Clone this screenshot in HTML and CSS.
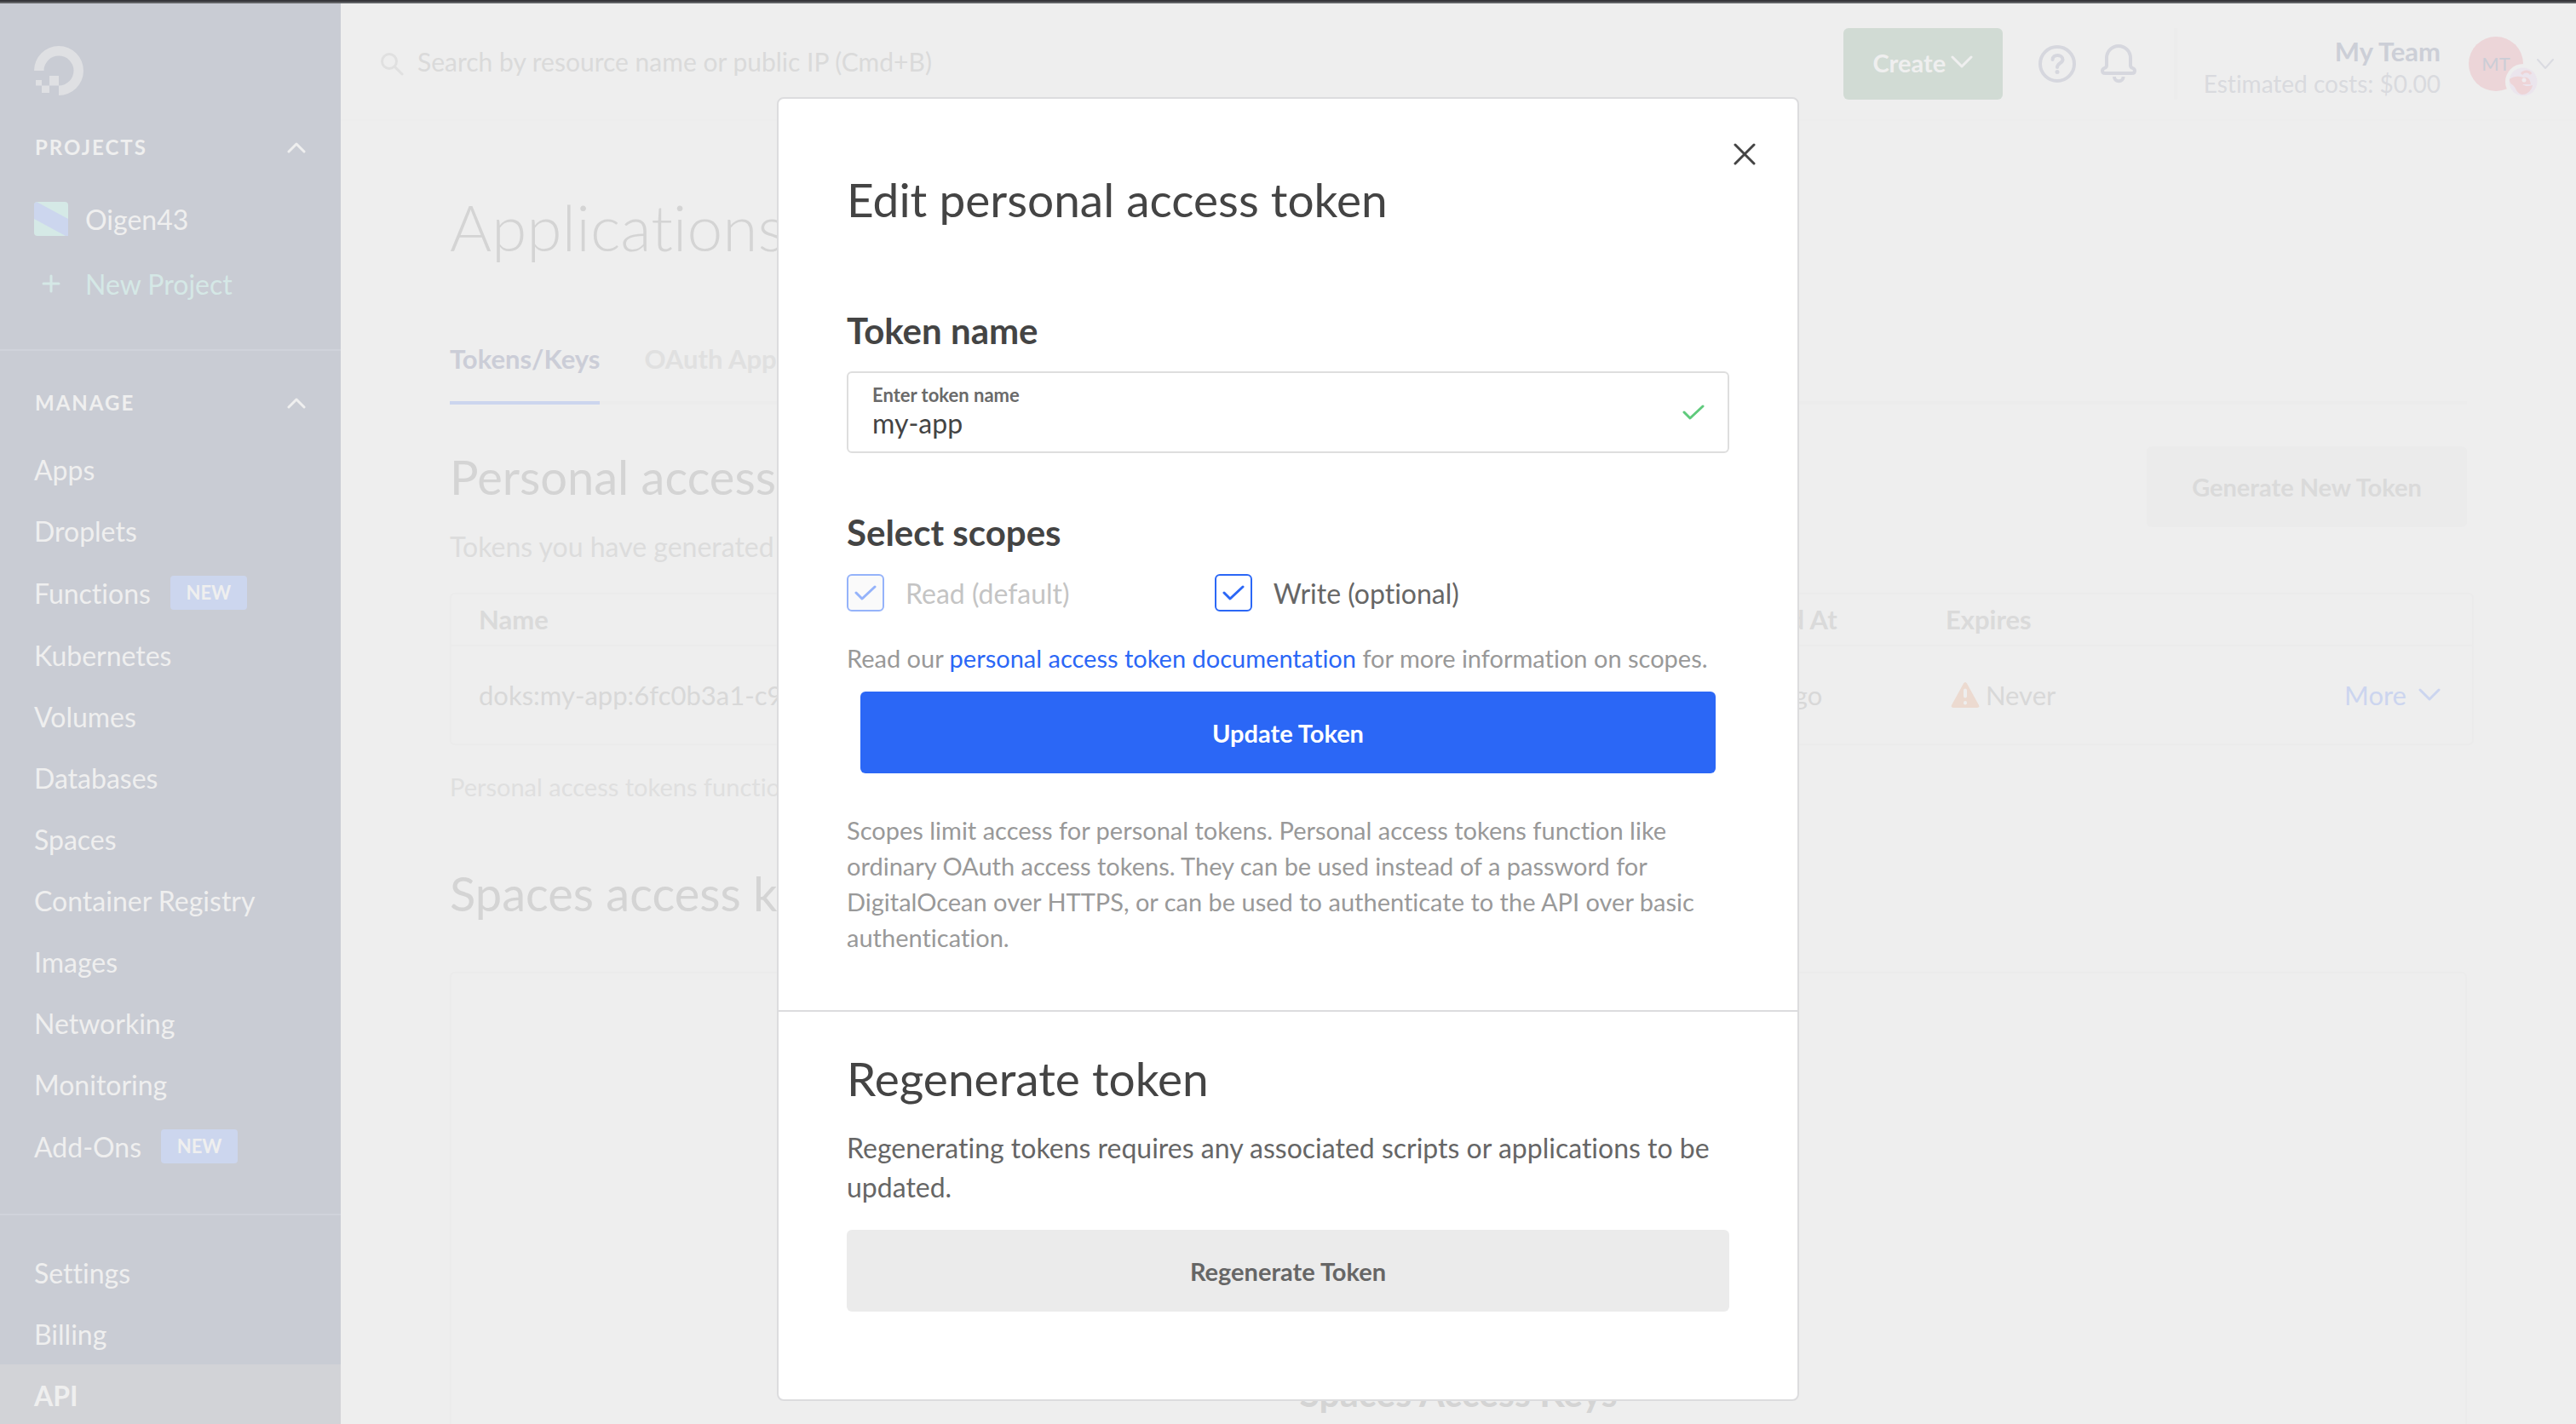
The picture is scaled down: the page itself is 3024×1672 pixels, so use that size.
FILE: index.html
```html
<!DOCTYPE html>
<html lang="en">
<head>
<meta charset="utf-8">
<meta name="viewport" content="width=device-width, initial-scale=1">
<title>Edit personal access token</title>
<link rel="stylesheet" href="styles.css">
</head>
<body>
<div class="app">
  <aside class="sidebar">
    <a class="logo" href="#" aria-label="Home">
      <svg width="58" height="58" viewBox="0 0 58 58" fill="currentColor"><path d="M29 58V46.5A17.5 17.5 0 1 0 11.5 29H0A29 29 0 1 1 29 58Z"/><path d="M18 35h11v11.500H18zM9 46.500h9V55H9zM2 40h7v6.500H2z"/></svg>
    </a>
    <section class="projects">
      <button class="group-title" type="button">PROJECTS
        <svg class="chevron" width="22" height="14" viewBox="0 0 22 14"><path d="M2 12l9-9 9 9"/></svg>
      </button>
      <a class="project" href="#">
        <svg class="project-icon" width="40" height="40" viewBox="0 0 40 40"><rect width="40" height="40" rx="4" fill="#d5e9e6"/><path d="M0 2v18l37 20h3V20L3 0z" fill="#ccd6ee"/></svg>
        Oigen43
      </a>
      <a class="project new-project" href="#">
        <svg class="project-icon" width="40" height="40" viewBox="0 0 40 40"><path d="M11 20h18M20 11v18" fill="none" stroke="currentColor" stroke-width="3" stroke-linecap="round"/></svg>
        New Project
      </a>
    </section>
    <nav class="manage">
      <button class="group-title" type="button">MANAGE
        <svg class="chevron" width="22" height="14" viewBox="0 0 22 14"><path d="M2 12l9-9 9 9"/></svg>
      </button>
      <ul class="menu">
        <li><a href="#">Apps</a></li>
        <li><a href="#">Droplets</a></li>
        <li><a class="with-badge" href="#">Functions <span class="badge">NEW</span></a></li>
        <li><a href="#">Kubernetes</a></li>
        <li><a href="#">Volumes</a></li>
        <li><a href="#">Databases</a></li>
        <li><a href="#">Spaces</a></li>
        <li><a href="#">Container Registry</a></li>
        <li><a href="#">Images</a></li>
        <li><a href="#">Networking</a></li>
        <li><a href="#">Monitoring</a></li>
        <li><a class="with-badge" href="#">Add-Ons <span class="badge">NEW</span></a></li>
      </ul>
    </nav>
    <nav class="account">
      <ul class="menu">
        <li><a href="#">Settings</a></li>
        <li><a href="#">Billing</a></li>
        <li><a class="current" href="#">API</a></li>
      </ul>
    </nav>
  </aside>

  <div class="page">
    <header class="topbar">
      <label class="search">
        <svg width="28" height="28" viewBox="0 0 28 28" fill="none" stroke="currentColor" stroke-width="3" stroke-linecap="round"><circle cx="11" cy="11" r="8.500"/><path d="M17.500 17.500L26 26"/></svg>
        <input type="text" aria-label="Search" placeholder="Search by resource name or public IP (Cmd+B)">
      </label>
      <button class="create" type="button">Create
        <svg class="chevron" width="26" height="16" viewBox="0 0 26 16"><path d="M2 2l11 11L24 2"/></svg>
      </button>
      <button class="icon-button help" type="button" aria-label="Help">
        <svg width="44" height="44" viewBox="0 0 44 44" fill="none" stroke="currentColor" stroke-width="4" stroke-linecap="round"><circle cx="22" cy="22" r="20"/><path d="M16.500 17c0-7 12-6.500 12 0 0 4-6.500 4.500-6.500 9"/><circle cx="22" cy="31.500" r="2.500" fill="currentColor" stroke="none"/></svg>
      </button>
      <button class="icon-button bell" type="button" aria-label="Notifications">
        <svg width="42" height="46" viewBox="0 0 42 46" fill="none" stroke="currentColor" stroke-width="4" stroke-linejoin="round"><path d="M7 25V16a14 14 0 0 1 28 0v9c0 4 5 2 5 6 0 2-1 3-3 3H5c-2 0-3-1-3-3 0-4 5-2 5-6z"/><path d="M16 38a5.300 5.300 0 0 0 10.600 0"/></svg>
      </button>
      <div class="team">
        <strong>My Team</strong>
        <span>Estimated costs: $0.00</span>
      </div>
      <button class="profile" type="button" aria-label="Account">
        <span class="avatar">MT
          <svg class="member" width="42" height="42" viewBox="0 0 42 42"><circle cx="21" cy="21" r="21" fill="#eee"/><circle cx="21" cy="21" r="16.500" fill="#ebe5ed"/><path d="M5 18c5-4 11-4 16-2 5-1 8 1 9 8H20c4 3 8 2 12 1-1 6-6 11-12 11-6-1-7-6-10-10-2-2-5-3-5-8z" fill="#eed4d7"/><path d="M19 12c3-4 9-4 11 0" fill="none" stroke="#eed4d7" stroke-width="3"/><circle cx="22" cy="19" r="2.500" fill="#efecef"/></svg>
        </span>
        <svg class="chevron" width="20" height="13" viewBox="0 0 20 13"><path d="M1 1l9 10 9-10"/></svg>
      </button>
    </header>

    <main class="content">
      <h1>Applications</h1>
      <nav class="tabs">
        <a class="active" href="#">Tokens/Keys</a>
        <a href="#">OAuth Apps</a>
      </nav>
      <section class="tokens">
        <div class="section-head">
          <div class="section-intro">
            <h2>Personal access</h2>
            <p>Tokens you have generated</p>
          </div>
          <button class="generate" type="button">Generate New Token</button>
        </div>
        <table class="token-table">
          <thead>
            <tr><th class="col-name">Name</th><th class="col-date">Created At</th><th class="col-date">Expires</th><th aria-label="Actions"></th></tr>
          </thead>
          <tbody>
            <tr>
              <td>doks:my-app:6fc0b3a1-c9</td>
              <td>1 day ago</td>
              <td>
                <span class="never">
                  <svg width="34" height="30" viewBox="0 0 34 30"><path d="M15 1.500q2-3 4 0L33 27q1 3-2 3H3q-3 0-2-3z" fill="#ecdad0"/><path d="M17 9.500v7M17 24v.5" stroke="#eee" stroke-width="4" stroke-linecap="round"/></svg>
                  Never
                </span>
              </td>
              <td>
                <button class="more" type="button">More
                  <svg class="chevron" width="26" height="16" viewBox="0 0 26 16"><path d="M2 2l11 11L24 2"/></svg>
                </button>
              </td>
            </tr>
          </tbody>
        </table>
        <p class="footnote">Personal access tokens function</p>
      </section>
      <section class="spaces">
        <h2>Spaces access keys</h2>
        <div class="empty-card"><h3>Spaces Access Keys</h3></div>
      </section>
    </main>
  </div>
</div>

<div class="overlay">
  <div class="modal" role="dialog" aria-modal="true" aria-labelledby="modal-title">
    <button class="close" type="button" aria-label="Close">
      <svg width="26" height="26" viewBox="0 0 26 26" fill="none" stroke="currentColor" stroke-width="3" stroke-linecap="round"><path d="M2 2l22 22M24 2L2 24"/></svg>
    </button>
    <form class="edit-token">
      <h2 id="modal-title">Edit personal access token</h2>
      <h3 class="name-title">Token name</h3>
      <div class="field">
        <div class="field-text">
          <label for="token-name">Enter token name</label>
          <input id="token-name" type="text" value="my-app">
        </div>
        <svg width="26" height="18" viewBox="0 0 26 18" fill="none" stroke="#5fca7c" stroke-width="3" stroke-linecap="round" stroke-linejoin="round"><path d="M2 9l7 7L24 2"/></svg>
      </div>
      <h3 class="scopes-title">Select scopes</h3>
      <div class="scopes">
        <label class="scope">
          <span class="tick"><input type="checkbox" checked disabled><svg width="26" height="18" viewBox="0 0 26 18"><path d="M2 9l7 7L24 2"/></svg></span>
          Read (default)
        </label>
        <label class="scope">
          <span class="tick"><input type="checkbox" checked><svg width="26" height="18" viewBox="0 0 26 18"><path d="M2 9l7 7L24 2"/></svg></span>
          Write (optional)
        </label>
      </div>
      <p class="docs">Read our <a href="#">personal access token documentation</a> for more information on scopes.</p>
      <button class="update" type="submit">Update Token</button>
      <p class="note">Scopes limit access for personal tokens. Personal access tokens function like ordinary OAuth access tokens. They can be used instead of a password for DigitalOcean over HTTPS, or can be used to authenticate to the API over basic authentication.</p>
    </form>
    <section class="regenerate">
      <h2>Regenerate token</h2>
      <p>Regenerating tokens requires any associated scripts or applications to be updated.</p>
      <button type="button">Regenerate Token</button>
    </section>
  </div>
</div>
</body>
</html>
```
FILE: styles.css
```css
* {
  box-sizing: border-box;
}

body,
h1,
h2,
h3,
p,
ul {
  margin: 0;
  padding: 0;
}

body {
  font-family: Lato, "Open Sans", sans-serif;
  font-size: 32px;
  font-variant-ligatures: none;
  color: #666;
  background: #eee;
}

a {
  color: inherit;
  text-decoration: none;
}

button,
input {
  margin: 0;
  padding: 0;
  border: 0;
  background: none;
  color: inherit;
  font: inherit;
  font-variant-ligatures: none;
}

svg {
  display: block;
  flex: none;
}

h2 {
  font-size: 55px;
  line-height: 66px;
  font-weight: 400;
}

.chevron {
  fill: none;
  stroke: currentColor;
  stroke-width: 3;
  stroke-linecap: round;
  stroke-linejoin: round;
}

/* Page shell */

.app {
  display: flex;
  height: 100vh;
  overflow: hidden;
  border-top: 2px solid #37373b;
  box-shadow: inset 0 2px #606165;
  padding-top: 2px;
}

.sidebar {
  flex: none;
  width: 400px;
  padding-top: 50px;
  background: #c9ccd4;
  color: #efefef;
}

.page {
  flex: 1;
  min-width: 0;
}

/* Sidebar */

.logo {
  display: block;
  margin-left: 40px;
  color: #dfe0e3;
}

.group-title {
  display: flex;
  align-items: center;
  justify-content: space-between;
  width: 100%;
  padding: 0 41px;
  font-size: 24px;
  line-height: 32px;
  font-weight: 700;
  letter-spacing: 2px;
}

.projects {
  padding: 45px 0 39px;
  border-bottom: 2px solid #d0d3db;
}

.project {
  display: flex;
  align-items: center;
  gap: 20px;
  height: 76px;
  padding: 0 40px;
}

.projects .group-title {
  margin-bottom: 30px;
}

.new-project {
  color: #d5e8e6;
}

.manage {
  padding: 45px 0 42px;
  border-bottom: 2px solid #d0d3db;
}

.manage .menu {
  margin-top: 26px;
}

.account {
  padding-top: 31px;
}

.menu {
  list-style: none;
}

.menu a {
  display: flex;
  align-items: center;
  gap: 23px;
  height: 72px;
  padding: 0 40px;
}

.menu .with-badge {
  height: 74px;
}

.menu .current {
  background: #d2d3d7;
  font-weight: 700;
}

.badge {
  width: 90px;
  border-radius: 4px;
  background: #ccd6ee;
  font-size: 22px;
  line-height: 40px;
  font-weight: 700;
  text-align: center;
}

/* Top bar */

.topbar {
  display: flex;
  align-items: center;
  padding: 29px 26px 23px 46px;
  border-bottom: 2px solid #ededed;
}

.search {
  display: flex;
  flex: 1;
  align-items: center;
  gap: 16px;
  color: #e0e0e0;
}

.search input {
  flex: 1;
  height: 84px;
  padding-bottom: 6px;
  font-size: 30px;
  outline: none;
}

.search input::placeholder {
  color: #dadada;
  opacity: 1;
}

.create {
  display: flex;
  align-items: center;
  justify-content: center;
  gap: 6px;
  width: 187px;
  height: 84px;
  padding-bottom: 4px;
  border-radius: 6px;
  background: #d1dbd4;
  color: #efefef;
  font-size: 29px;
  font-weight: 700;
}

.icon-button {
  color: #d6d7de;
}

.help {
  margin-left: 42px;
}

.bell {
  margin-left: 29px;
}

.team {
  display: flex;
  flex-direction: column;
  margin-left: 44px;
  padding: 8px 0 0 31px;
  border-left: 4px solid #ececec;
  text-align: right;
  line-height: 38px;
  font-size: 28px;
  color: #d9dade;
}

.team strong {
  color: #cccfd7;
  font-size: 31px;
  font-weight: 700;
}

.profile {
  display: flex;
  align-items: center;
  gap: 16px;
  margin-left: 33px;
  color: #dadbe1;
}

.profile .chevron {
  stroke-width: 2;
}

.avatar {
  position: relative;
  width: 64px;
  border-radius: 50%;
  background: #ecd5d8;
  color: #cbcdd6;
  font-size: 22px;
  line-height: 64px;
  text-align: center;
}

.member {
  position: absolute;
  right: -21px;
  bottom: -10px;
}

/* Page content */

.content {
  padding: 80px 128px 0;
  color: #d4d4d4;
}

.content h2 {
  font-size: 56px;
}

h1 {
  font-size: 75px;
  line-height: 88px;
  font-weight: 300;
}

.tabs {
  display: flex;
  gap: 52px;
  margin-top: 91px;
  border-bottom: 4px solid #ececec;
  color: #e0e0e0;
  font-size: 31px;
  line-height: 40px;
  font-weight: 700;
}

.tabs a {
  margin-bottom: -4px;
  padding-bottom: 30px;
  border-bottom: 4px solid transparent;
}

.tabs .active {
  border-color: #ccd5ee;
  color: #cbcdd7;
}

.section-head {
  display: flex;
  align-items: flex-start;
  justify-content: space-between;
  margin-top: 49px;
}

.section-intro {
  padding-top: 3px;
}

.section-intro p {
  margin-top: 27px;
  color: #dcdcdc;
  line-height: 44px;
}

.generate {
  width: 376px;
  height: 95px;
  border-radius: 6px;
  background: #ebebeb;
  color: #dadada;
  font-size: 29px;
  font-weight: 700;
}

.token-table {
  width: calc(100% + 8px);
  margin-top: 32px;
  border: 2px solid #ebebeb;
  border-radius: 6px;
  border-spacing: 0;
  table-layout: fixed;
  color: #d8d8d8;
}

.token-table th,
.token-table td {
  height: 61px;
  padding: 0 33px 0 32px;
  text-align: left;
}

.token-table th {
  padding-bottom: 2px;
  border-bottom: 2px solid #ebebeb;
  color: #dadada;
  font-size: 31px;
  font-weight: 700;
}

.token-table td {
  height: 114px;
  font-size: 31px;
}

.token-table td:last-child {
  padding-right: 37px;
}

.col-name {
  width: 61%;
}

.col-date {
  width: 275px;
}

.never {
  display: flex;
  align-items: center;
  gap: 7px;
  padding-left: 6px;
}

.more {
  display: flex;
  align-items: center;
  gap: 14px;
  margin-left: auto;
  color: #ccd5ef;
}

.footnote {
  margin-top: 28px;
  color: #dfdfdf;
  font-size: 29px;
  line-height: 42px;
}

.spaces {
  margin-top: 71px;
}

.empty-card {
  height: 800px;
  margin-top: 59px;
  padding-top: 467px;
  border: 2px solid #ebebeb;
  border-radius: 6px;
  text-align: center;
}

.empty-card h3 {
  font-size: 43px;
  line-height: 52px;
  font-weight: 700;
}

/* Modal */

.overlay {
  position: fixed;
  inset: 0;
  display: flex;
  align-items: flex-start;
  justify-content: center;
  padding-top: 114px;
  overflow: auto;
}

.modal {
  position: relative;
  width: 1200px;
  max-width: 100%;
  border: 2px solid #dcdcde;
  border-radius: 8px;
  background: #fff;
}

.modal h2,
.modal h3 {
  color: #444;
}

.modal h3 {
  font-size: 42px;
  line-height: 52px;
  font-weight: 700;
}

.close {
  position: absolute;
  top: 41px;
  right: 38px;
  display: grid;
  place-items: center;
  width: 48px;
  height: 48px;
  color: #444;
}

.edit-token {
  padding: 85px 80px 64px;
  border-bottom: 2px solid #dcdcde;
}

.name-title {
  margin-top: 95px;
}

.field {
  display: flex;
  align-items: center;
  margin-top: 22px;
  padding: 12px 27px 12px 28px;
  border: 2px solid #dedede;
  border-radius: 6px;
}

.field-text {
  display: flex;
  flex: 1;
  flex-direction: column;
}

.field label {
  font-size: 22px;
  line-height: 28px;
  font-weight: 700;
  color: #6a6a6a;
}

.field input {
  height: 40px;
  padding-bottom: 4px;
  color: #444;
  outline: none;
}

.scopes-title {
  margin-top: 67px;
}

.scopes {
  display: grid;
  grid-template-columns: 5fr 7fr;
  margin-top: 23px;
}

.scope {
  display: flex;
  align-items: center;
  gap: 25px;
}

.scope:has(:disabled) {
  color: #c4c4c4;
}

.tick {
  display: grid;
  place-items: center;
}

.tick > * {
  grid-area: 1 / 1;
}

.tick input {
  appearance: none;
  width: 44px;
  height: 44px;
  border: 2px solid #2b67f6;
  border-radius: 6px;
}

.tick svg {
  fill: none;
  stroke: #2b67f6;
  stroke-width: 3;
  stroke-linecap: round;
  stroke-linejoin: round;
  pointer-events: none;
}

.tick input:disabled {
  border-color: #95b3fa;
  background: #fafafa;
}

.tick input:disabled + svg {
  stroke: #95b3fa;
}

.docs,
.note {
  color: #999;
  font-size: 29px;
  line-height: 42px;
}

.docs {
  margin-top: 34px;
}

.docs a {
  color: #2b67f6;
}

.update {
  display: block;
  width: calc(100% - 32px);
  height: 96px;
  margin: 18px 16px 46px;
  border-radius: 6px;
  background: #2b67f6;
  color: #fff;
  font-size: 29px;
  font-weight: 700;
}

.regenerate {
  padding: 45px 80px 103px;
}

.regenerate p {
  margin: 26px 0 27px;
  line-height: 46px;
}

.regenerate button {
  width: 100%;
  height: 96px;
  border-radius: 6px;
  background: #ebebeb;
  font-size: 29px;
  font-weight: 700;
}
```
